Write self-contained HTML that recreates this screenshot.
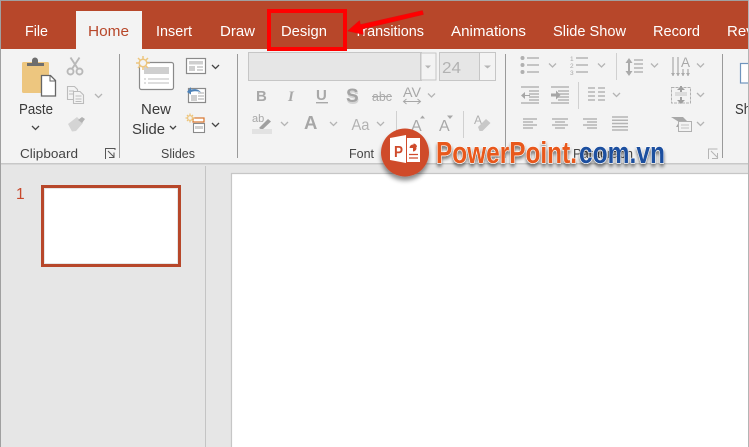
<!DOCTYPE html>
<html><head><meta charset="utf-8"><style>
html,body{margin:0;padding:0;width:749px;height:447px;overflow:hidden;background:#e6e6e6}
svg{display:block;position:absolute;left:0;top:0}
text{font-family:"Liberation Sans",sans-serif}
.t{font-size:15px;fill:#fff}
.r{font-size:15px;fill:#3a3a3a}
.g{font-size:13px;fill:#444}
.ln{stroke:#b4b4b4;stroke-width:1.4;fill:none}
.ch{stroke:#b4b4b4;stroke-width:1.3;fill:none}
.cd{stroke:#444;stroke-width:1.3;fill:none}
</style></head><body>
<svg width="749" height="447" viewBox="0 0 749 447" xmlns="http://www.w3.org/2000/svg">
<defs>
<filter id="sh" x="-20%" y="-30%" width="140%" height="170%"><feGaussianBlur in="SourceAlpha" stdDeviation="1.6"/><feOffset dx="0" dy="3"/><feComponentTransfer><feFuncA type="linear" slope=".5"/></feComponentTransfer><feMerge><feMergeNode/><feMergeNode in="SourceGraphic"/></feMerge></filter>
<filter id="sc" x="-30%" y="-30%" width="160%" height="170%"><feGaussianBlur in="SourceAlpha" stdDeviation="2.5"/><feOffset dy="4"/><feComponentTransfer><feFuncA type="linear" slope=".45"/></feComponentTransfer><feMerge><feMergeNode/><feMergeNode in="SourceGraphic"/></feMerge></filter>
</defs>
<!-- base -->
<rect width="749" height="447" fill="#e6e6e6"/>
<rect x="0" y="0" width="749" height="49" fill="#b7472a"/>
<rect x="0" y="49" width="749" height="114" fill="#f3f3f3"/>
<rect x="0" y="163" width="749" height="1.5" fill="#c8c8c8"/>
<rect x="76" y="11" width="66" height="38" fill="#f3f3f3"/>
<!-- tabs -->
<text class="t" x="25" y="36" textLength="23" lengthAdjust="spacingAndGlyphs">File</text>
<text class="t" x="88" y="36" textLength="41" lengthAdjust="spacingAndGlyphs" style="fill:#b7472a">Home</text>
<text class="t" x="156" y="36" textLength="36" lengthAdjust="spacingAndGlyphs">Insert</text>
<text class="t" x="220" y="36" textLength="35" lengthAdjust="spacingAndGlyphs">Draw</text>
<text class="t" x="281" y="36" textLength="46" lengthAdjust="spacingAndGlyphs">Design</text>
<text class="t" x="354" y="36" textLength="70" lengthAdjust="spacingAndGlyphs">Transitions</text>
<text class="t" x="451" y="36" textLength="75" lengthAdjust="spacingAndGlyphs">Animations</text>
<text class="t" x="553" y="36" textLength="73" lengthAdjust="spacingAndGlyphs">Slide Show</text>
<text class="t" x="653" y="36" textLength="47" lengthAdjust="spacingAndGlyphs">Record</text>
<text class="t" x="727" y="36" textLength="30" lengthAdjust="spacingAndGlyphs">Revi</text>
<!-- separators -->
<g fill="#9a9a9a">
<rect x="119" y="54" width="1" height="104"/><rect x="237" y="54" width="1" height="104"/><rect x="505" y="54" width="1" height="104"/><rect x="722" y="54" width="1" height="104"/>
</g>
<g fill="#d0d0d0">
<rect x="396" y="111" width="1" height="27"/><rect x="463" y="111" width="1" height="27"/>
<rect x="616" y="53" width="1" height="27"/><rect x="578" y="82" width="1" height="27"/>
</g>
<!-- Clipboard -->
<rect x="22" y="62" width="27" height="31" rx="1.5" fill="#edc67f"/>
<path d="M27 66v-3h5v-2.500a3 3 0 0 1 6 0V63h6v3z" fill="#6e6e6e"/>
<path d="M41.500 75.500h9l5 5v15.500h-14z" fill="#fff" stroke="#666" stroke-width="1.300"/>
<path d="M50 75.500v5.500h5.500" fill="none" stroke="#666"/>
<text class="r" x="19" y="114" textLength="34" lengthAdjust="spacingAndGlyphs">Paste</text>
<path class="cd" d="M32 126l3.500 3.500 3.500-3.500"/>
<g style="stroke:#b8b8b8;stroke-width:1.900;fill:none"><circle cx="70.500" cy="71.500" r="3"/><circle cx="79.500" cy="71.500" r="3"/><path d="M72 69L79.500 57.500M78 69L70.500 57.500"/></g>
<g fill="#f3f3f3" stroke="#bcbcbc" stroke-width="1.100"><path d="M67.500 86.500h7l3 3v10h-10z"/><path d="M73.500 91.500h6.500l3.500 3.500v8.500h-10z"/><path d="M69 91h5M69 94h4M75.500 96h6M75.500 99h6M75.500 101.500h6" fill="none"/></g>
<path class="ch" d="M95 94l3.500 3.500 3.500-3.500"/>
<path d="M68 124l9-7 6 6-7 8-4 .5z" fill="#d4d4d4"/><path d="M78 120l4-3 3 2-3 4z" fill="#b2b2b2"/>
<text class="g" x="20" y="158" textLength="58" lengthAdjust="spacingAndGlyphs">Clipboard</text>
<path d="M105.500 159v-10.500h10M108 151l6 6M114 152.500v5h-5M115 150v-1.500" fill="none" stroke="#555" stroke-width="1"/>
<!-- Slides -->
<rect x="139.500" y="62.500" width="34" height="27" rx="2" fill="#fff" stroke="#8a8a8a" stroke-width="1.200"/>
<rect x="144" y="67" width="25" height="7" fill="#cfcfcf"/>
<path d="M148 79h21M148 83h21M144 79h2M144 83h2" stroke="#bdbdbd" fill="none"/>
<g stroke="#edc67f" stroke-width="1.500" fill="none"><circle cx="143" cy="63" r="3.800" fill="#f3f3f3"/><path d="M143 56v3M143 67v3M136 63h3M147 63h3M138 58l2 2M146 66l2 2M148 58l-2 2M140 66l-2 2"/></g>
<text class="r" x="141" y="114" textLength="30" lengthAdjust="spacingAndGlyphs">New</text>
<text class="r" x="132" y="134" textLength="33" lengthAdjust="spacingAndGlyphs">Slide</text>
<path class="cd" d="M170 126l3 3 3-3"/>
<rect x="186.500" y="58.500" width="19" height="15" fill="#fff" stroke="#8a8a8a" stroke-width="1.200"/><rect x="189" y="61" width="14" height="3.500" fill="#cfcfcf"/><rect x="189" y="66" width="6" height="5" fill="#cfcfcf"/><path d="M197 67h6M197 70h6" stroke="#aaa"/>
<path class="cd" d="M212 65l3.500 3.500 3.500-3.500"/>
<rect x="188.500" y="88.500" width="17" height="14" fill="#fff" stroke="#8a8a8a" stroke-width="1.200"/><rect x="191" y="95" width="6" height="6" fill="#cfcfcf"/><path d="M198 93h6M198 96h6M198 99h6" stroke="#aaa"/>
<path d="M187 92l4-5v2.500c5-1 8 0 10 3-3-1.500-6-1.500-10-.5v2.500z" fill="#4d82b8"/>
<rect x="193" y="118" width="11" height="4" fill="#fff" stroke="#d8742c" stroke-width="1.200"/>
<rect x="193.500" y="123.500" width="11" height="9" fill="#fff" stroke="#8a8a8a" stroke-width="1.100"/><rect x="195" y="126" width="8" height="3" fill="#cfcfcf"/>
<g stroke="#edc67f" stroke-width="1.300" fill="none"><circle cx="190" cy="118" r="2.400"/><path d="M190 113.500v2M190 120.500v2M185.500 118h2M192.500 118h2M187 115l1 1M192 120l1 1M193 115l-1 1M188 120l-1 1"/></g>
<path class="cd" d="M212 123l3.500 3.500 3.500-3.500"/>
<text class="g" x="161" y="158" textLength="34" lengthAdjust="spacingAndGlyphs">Slides</text>
<!-- Font -->
<rect x="248.500" y="52.500" width="173" height="28" fill="#e6e6e6" stroke="#c6c6c6"/>
<path d="M420.500 52.500v28" stroke="#c6c6c6"/><rect x="421" y="53" width="15" height="27" fill="#f3f3f3" stroke="#c6c6c6"/>
<path d="M425 65.500h6l-3 3z" fill="#b5b5b5"/>
<rect x="439.500" y="52.500" width="56" height="28" fill="#e6e6e6" stroke="#c6c6c6"/>
<rect x="479.500" y="52.500" width="16" height="28" fill="#f3f3f3" stroke="#c6c6c6"/>
<path d="M484 65.500h7l-3.500 3z" fill="#b5b5b5"/>
<text x="442" y="73" font-size="15.500" fill="#b2b2b2" textLength="19" lengthAdjust="spacingAndGlyphs">24</text>
<text x="256" y="101" font-size="15" font-weight="bold" fill="#a8a8a8">B</text>
<text x="288" y="101" font-size="15" font-style="italic" style="font-family:'Liberation Serif',serif" font-weight="bold" fill="#a8a8a8">I</text>
<text x="316" y="100" font-size="15" font-weight="bold" fill="#a8a8a8">U</text><rect x="316" y="102" width="12" height="1.400" fill="#a8a8a8"/>
<text x="346.500" y="104" font-size="19" font-weight="bold" fill="#d4d4d4">S</text>
<text x="346" y="102" font-size="19" font-weight="bold" fill="#a4a4a4">S</text>
<text x="372" y="101" font-size="12.500" fill="#aaa" textLength="20" lengthAdjust="spacingAndGlyphs">abc</text><rect x="372" y="96" width="20" height="1" fill="#aaa"/>
<text x="403" y="97" font-size="13.500" fill="#a8a8a8" textLength="18" lengthAdjust="spacingAndGlyphs">AV</text>
<path d="M404 101.500h16M406.500 99l-3 2.500 3 2.500M417.500 99l3 2.500-3 2.500" fill="none" stroke="#a8a8a8"/>
<path class="ch" d="M428 93.500l3.500 3.500 3.500-3.500"/>
<text x="252" y="122" font-size="11" fill="#a8a8a8">ab</text>
<path d="M259 128l9-9 3 2.500-9 8.500z" fill="#a0a0a0"/>
<rect x="252" y="129" width="20" height="5" fill="#e2e2e2"/>
<path class="ch" d="M281 122l3.500 3.500 3.500-3.500"/>
<text x="304" y="129" font-size="18.500" font-weight="bold" fill="#a6a6a6">A</text>
<path class="ch" d="M330 122l3.500 3.500 3.500-3.500"/>
<text x="351.500" y="130" font-size="16" fill="#b2b2b2" textLength="18" lengthAdjust="spacingAndGlyphs">Aa</text>
<path class="ch" d="M377 122l3.500 3.500 3.500-3.500"/>
<text x="411" y="131" font-size="16" fill="#a8a8a8">A</text><path d="M420 118.500h5l-2.500-3z" fill="#a8a8a8"/>
<text x="439" y="131" font-size="16" fill="#a8a8a8">A</text><path d="M447 115.500h6l-3 3.500z" fill="#a8a8a8"/>
<text x="474" y="124" font-size="12" fill="#b0b0b0">A</text>
<path d="M478 127l8-8 4.500 4-8 8h-3z" fill="#c8c8c8"/>
<!-- Paragraph group text -->
<text class="g" x="573" y="158" textLength="60" lengthAdjust="spacingAndGlyphs">Paragraph</text>
<text class="g" x="349" y="158" textLength="25" lengthAdjust="spacingAndGlyphs">Font</text>
<path d="M708.500 159v-10h9M711 151l7 7M717.500 153v5.500h-5.500" fill="none" stroke="#b5b5b5"/>
<!-- paragraph icons -->
<g fill="#b0b0b0"><circle cx="522.500" cy="58" r="2"/><circle cx="522.500" cy="65" r="2"/><circle cx="522.500" cy="72" r="2"/></g>
<path class="ln" d="M527 58h12M527 65h12M527 72h12M576 58h12M576 65h12M576 72h12"/>
<text x="570" y="61" font-size="6.500" fill="#a8a8a8">1</text><text x="570" y="68" font-size="6.500" fill="#a8a8a8">2</text><text x="570" y="75" font-size="6.500" fill="#a8a8a8">3</text>
<path class="ch" d="M549 63.500l3.500 3.500 3.500-3.500M598 63.500l3.500 3.500 3.500-3.500M651 63.500l3.500 3.500 3.500-3.500M697 63.500l3.500 3.500 3.500-3.500M613 93l3.500 3.500 3.500-3.500M697 93l3.500 3.500 3.500-3.500M697 122l3.500 3.500 3.500-3.500"/>
<path d="M629 62v11" stroke="#aaa" stroke-width="2" fill="none"/><path d="M625.500 63l3.500-5 3.500 5zM625.500 71l3.500 5 3.500-5z" fill="#aaa"/>
<path class="ln" d="M634 60h9M634 64h9M634 68h9M634 72h9"/>
<path class="ln" d="M673 57v19M678 57v19M683 69v7M688 69v7"/>
<path d="M671 73l2 3 2-3zM676 73l2 3 2-3zM681 73l2 3 2-3zM686 73l2 3 2-3z" fill="#aaa"/>
<text x="681" y="67" font-size="13.500" fill="#a8a8a8">A</text>
<path class="ln" d="M521 87h18M529 91h10M529 94h10M529 97h10M529 100h10M521 103h18M551 87h18M558 91h11M558 94h11M558 97h11M558 100h11M551 103h18"/>
<path d="M530 95h-5v-3l-4 3.500 4 3.500v-3h5zM551 93.500h5v-3l4.500 4.500-4.500 4.500v-3h-5z" fill="#a6a6a6"/>
<path class="ln" d="M588 88h7M598 88h7M588 92h7M598 92h7M588 96h7M598 96h7M588 100h7M598 100h7"/>
<path class="ln" d="M523 119h14M523 122h10M523 125h14M523 128h10M552 119h16M555 122h10M552 125h16M555 128h10M583 119h14M587 122h10M583 125h14M587 128h10M612 117h16M612 120.250h16M612 123.500h16M612 126.750h16M612 130h16"/>
<rect x="671.500" y="87.500" width="19" height="15.500" fill="none" stroke="#b0b0b0" stroke-dasharray="3 1"/>
<path d="M681 86v6M681 97v6" stroke="#a0a0a0" stroke-width="2"/><path d="M677 90l4-4 4 4zM677 100l4 4 4-4z" fill="#a0a0a0"/>
<path d="M675 95h12M675 93h12" stroke="#c4c4c4"/>
<path d="M671 117h12l5 5-5 5h-7l3-5z" fill="#a8a8a8"/>
<rect x="678.500" y="121.500" width="13" height="10" fill="#f3f3f3" stroke="#b0b0b0"/><path d="M681 125h8M681 128h8" stroke="#c0c0c0"/>
<!-- right group -->
<rect x="740.500" y="63.500" width="10" height="19.500" fill="#fff" stroke="#6f94bd" stroke-width="1.200"/>
<text class="r" x="735" y="114" style="fill:#333" textLength="16" lengthAdjust="spacingAndGlyphs">Sh</text>
<!-- pane -->
<rect x="232" y="173" width="517" height="274" fill="#fff"/>
<path d="M231.500 447V173.500H749" fill="none" stroke="#c6c6c6" stroke-width="1.200"/>
<rect x="205" y="166" width="1" height="281" fill="#c4c4c4"/>
<text x="16" y="199" font-size="15.500" fill="#c8492c">1</text>
<rect x="42.500" y="186.500" width="137" height="79" fill="#fff" stroke="#b7472a" stroke-width="3"/>
<rect x="44.500" y="188.500" width="133" height="75" fill="none" stroke="#e6e6e6"/>
<!-- red box and arrow -->
<rect x="269" y="11" width="76" height="38" fill="none" stroke="#f00" stroke-width="4"/>
<path d="M422.500 10.500l1 4-61 14.500 1 5.500-16-3.500 12-10.500 1 4z" fill="#f00" stroke="#e01010" stroke-width=".5"/>
<!-- logo -->
<g filter="url(#sc)"><circle cx="405" cy="152.500" r="24" fill="#cf4b2c"/></g>
<path d="M390 138l16-3v28l-16-3z" fill="#fff"/>
<rect x="407" y="138" width="13" height="24" fill="#fff"/>
<path d="M409.500 148a3.500 3.500 0 1 1 3.500 3.500v-3.500z" fill="#cf4b2c"/><path d="M413.500 143.500a3.500 3.500 0 0 1 3.500 3.500h-3.500z" fill="#cf4b2c"/>
<path d="M409 154.500h9M409 158h9" stroke="#cf4b2c" stroke-width="1.200"/>
<text x="394" y="157" font-size="16" font-weight="bold" fill="#cf4b2c" textLength="9" lengthAdjust="spacingAndGlyphs">P</text>
<g filter="url(#sh)" font-weight="bold" font-size="31" stroke="#fff" stroke-width="1.200" paint-order="stroke">
<text x="436" y="163" textLength="141" lengthAdjust="spacingAndGlyphs" fill="#e8591c">PowerPoint.</text>
<text x="579" y="163" textLength="86" lengthAdjust="spacingAndGlyphs" fill="#1f4f9f">com.vn</text>
</g>
<!-- window edges -->
<rect x="0" y="0" width="749" height="1" fill="#a0a0a0"/>
<rect x="0" y="0" width="1" height="447" fill="#a0a0a0"/>
<rect x="748" y="0" width="1" height="447" fill="#b4b4b4"/>
</svg>
</body></html>
